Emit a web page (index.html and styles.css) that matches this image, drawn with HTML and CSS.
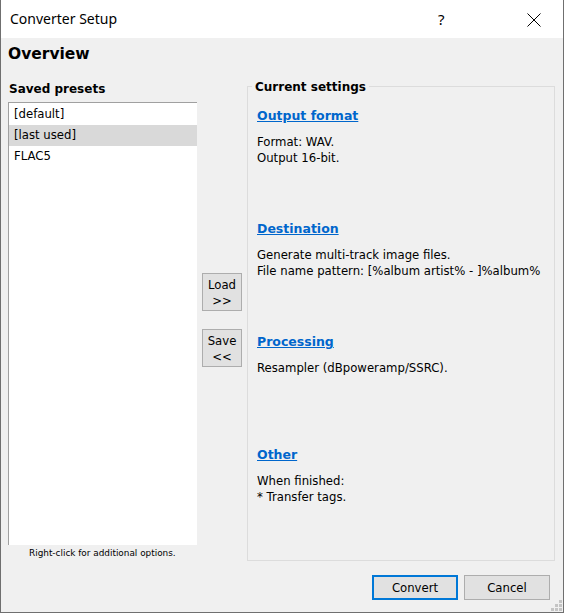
FILE: index.html
```html
<!DOCTYPE html>
<html lang="en">
<head>
    <meta charset="UTF-8">
    <title>Converter Setup</title>
    <link rel="stylesheet" href="styles.css">
</head>
<body>

    <div class="window">
        <div class="titlebar">
            <span class="title">Converter Setup</span>
            <span class="title-help">?</span>
            <span class="title-close">
                <svg width="14" height="14" viewBox="0 0 14 14"><path d="M0.5 0.5 L13.5 13.5 M13.5 0.5 L0.5 13.5" stroke="#000" stroke-width="1" fill="none"/></svg>
            </span>
        </div>

        <div class="content">
            <h1 class="page-title">Overview</h1>

            <div class="panes">
                <div class="presets">
                    <div class="pane-label">Saved presets</div>
                    <ul class="listbox">
                        <li class="list-item">[default]</li>
                        <li class="list-item selected">[last used]</li>
                        <li class="list-item">FLAC5</li>
                    </ul>
                    <div class="hint">Right-click for additional options.</div>
                </div>

                <div class="transfer">
                    <button class="btn btn-small">Load<br>&gt;&gt;</button>
                    <button class="btn btn-small">Save<br>&lt;&lt;</button>
                </div>

                <div class="group">
                    <span class="group-title">Current settings</span>

                    <div class="section">
                        <a class="section-link" href="#">Output format</a>
                        <p class="section-text">Format: WAV.<br>Output 16-bit.</p>
                    </div>
                    <div class="section">
                        <a class="section-link" href="#">Destination</a>
                        <p class="section-text">Generate multi-track image files.<br>File name pattern: [%album artist% - ]%album%</p>
                    </div>
                    <div class="section">
                        <a class="section-link" href="#">Processing</a>
                        <p class="section-text">Resampler (dBpoweramp/SSRC).</p>
                    </div>
                    <div class="section">
                        <a class="section-link" href="#">Other</a>
                        <p class="section-text">When finished:<br>* Transfer tags.</p>
                    </div>
                </div>
            </div>

            <div class="footer">
                <button class="btn btn-wide default">Convert</button>
                <button class="btn btn-wide">Cancel</button>
            </div>
        </div>

        <div class="grip">
            <svg width="11" height="11" viewBox="0 0 11 11" fill="#c4c4c4">
                <rect x="8" y="0" width="3" height="3"/>
                <rect x="4" y="4" width="3" height="3"/>
                <rect x="8" y="4" width="3" height="3"/>
                <rect x="0" y="8" width="3" height="3"/>
                <rect x="4" y="8" width="3" height="3"/>
                <rect x="8" y="8" width="3" height="3"/>
            </svg>
        </div>
    </div>

</body>
</html>
```

FILE: styles.css
```css
/* Converter Setup dialog */

:root {
    --window-bg: #f0f0f0;
    --window-border: #6f6f6f;
    --text-color: #000000;
    --link-color: #0066cc;
    --group-border: #dcdcdc;
    --button-bg: #e1e1e1;
    --button-border: #adadad;
    --accent-color: #0078d7;
    --selected-bg: #d9d9d9;
}

body {
    margin: 0;
    font-family: 'DejaVu Sans', sans-serif;
    color: var(--text-color);
}

/* --- Window frame --- */
.window {
    position: relative;
    width: 564px;
    height: 613px;
    box-sizing: border-box;
    border: 1px solid var(--window-border);
    border-top: none;
    background-color: var(--window-bg);
    display: flex;
    flex-direction: column;
}

.titlebar {
    height: 38px;
    background-color: #ffffff;
    display: flex;
    align-items: center;
    padding-left: 9px;
    flex-shrink: 0;
}

.title {
    font-family: 'Noto Sans', sans-serif;
    font-size: 14px;
    flex-grow: 1;
    padding-bottom: 1px;
}

.title-help {
    font-family: 'Noto Sans', sans-serif;
    font-size: 15px;
    width: 88px;
    margin-right: 1px;
    padding-bottom: 1px;
}

.title-close {
    display: flex;
    width: 36px;
    padding-top: 1px;
}

/* --- Content area --- */
.content {
    flex-grow: 1;
    padding: 0 0 0 7px;
    display: flex;
    flex-direction: column;
}

.page-title {
    margin: 7px 0 0 0;
    font-size: 15.5px;
    font-weight: bold;
    height: 22px;
}

.panes {
    display: flex;
    margin-top: 17px;
}

/* --- Saved presets column --- */
.presets {
    width: 189px;
    display: flex;
    flex-direction: column;
}

.pane-label {
    font-size: 12px;
    font-weight: bold;
    height: 20px;
    padding-left: 1px;
    margin-top: -2px;
}

.listbox {
    list-style: none;
    margin: 0;
    padding: 1px 0 0 0;
    height: 443px;
    box-sizing: border-box;
    background-color: #ffffff;
    border-top: 1px solid #a0a0a0;
    border-left: 1px solid #a0a0a0;
}

.list-item {
    height: 21px;
    line-height: 20px;
    font-size: 11.7px;
    padding-left: 5px;
}

.list-item.selected {
    background-color: var(--selected-bg);
}

.hint {
    font-size: 8.9px;
    padding-left: 21px;
    margin-top: 3px;
}

/* --- Load / Save buttons --- */
.transfer {
    width: 50px;
    display: flex;
    flex-direction: column;
    align-items: center;
    padding-top: 189px;
    gap: 18px;
}

.btn {
    font-family: 'DejaVu Sans', sans-serif;
    font-size: 11.7px;
    color: var(--text-color);
    background-color: var(--button-bg);
    border: 1px solid var(--button-border);
    padding: 0;
    cursor: pointer;
}

.btn-small {
    width: 40px;
    height: 38px;
    line-height: 16px;
    padding-top: 1px;
}

/* --- Current settings group --- */
.group {
    position: relative;
    width: 308px;
    height: 475px;
    box-sizing: border-box;
    border: 1px solid var(--group-border);
    margin-top: 2px;
    padding: 18px 0 0 9px;
}

.group-title {
    position: absolute;
    top: -7px;
    left: 4px;
    padding: 0 3px 0 3px;
    background-color: var(--window-bg);
    font-size: 12px;
    font-weight: bold;
}

.section {
    height: 113px;
}

.section-link {
    display: inline-block;
    color: var(--link-color);
    font-size: 12.5px;
    font-weight: bold;
    text-decoration: underline;
}

.section-text {
    margin: 10px 0 0 0;
    font-size: 11.7px;
    line-height: 16px;
}

/* --- Bottom buttons --- */
.footer {
    display: flex;
    justify-content: flex-end;
    gap: 6px;
    padding-right: 13px;
    margin-top: 14px;
}

.btn-wide {
    width: 86px;
    height: 25px;
}

.btn-wide.default {
    border: 2px solid var(--accent-color);
}

.grip {
    position: absolute;
    right: 1px;
    bottom: 1px;
    display: flex;
}
```
